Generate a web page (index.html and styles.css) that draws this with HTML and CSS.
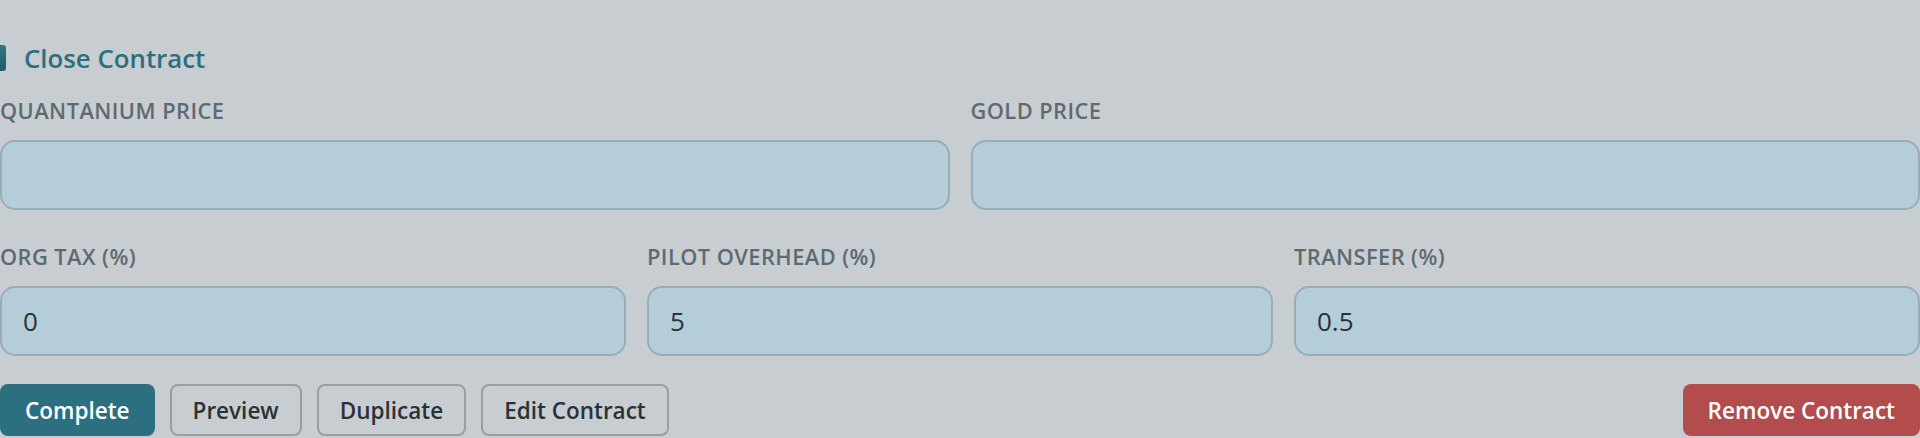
FILE: index.html
```html
<!DOCTYPE html>
<html lang="en">
  <head>
    <meta charset="UTF-8" />
    <meta name="viewport" content="width=device-width, initial-scale=1.0" />
    <title>Close Contract</title>

    <link rel="stylesheet" href="styles.css">
  </head>
  <body>
    <div class="contract">
      <h2 class="contract-title">Close Contract</h2>

      <div class="contract-row row-2">
        <label class="field">
          <span class="field-label">Quantanium Price</span>
          <input type="text" class="field-input" />
        </label>
        <label class="field">
          <span class="field-label">Gold Price</span>
          <input type="text" class="field-input" />
        </label>
      </div>

      <div class="contract-row row-3">
        <label class="field">
          <span class="field-label">Org Tax (%)</span>
          <input type="text" class="field-input" value="0" />
        </label>
        <label class="field">
          <span class="field-label">Pilot Overhead (%)</span>
          <input type="text" class="field-input" value="5" />
        </label>
        <label class="field">
          <span class="field-label">Transfer (%)</span>
          <input type="text" class="field-input" value="0.5" />
        </label>
      </div>

      <div class="contract-actions">
        <button class="btn btn-primary">Complete</button>
        <button class="btn btn-outline">Preview</button>
        <button class="btn btn-outline">Duplicate</button>
        <button class="btn btn-outline">Edit Contract</button>
        <button class="btn btn-danger">Remove Contract</button>
      </div>
    </div>
  </body>
</html>
```

FILE: styles.css
```css
:root {
  --bg-primary: #c8cdd1;
  --teal: #2c6f7e;
  --red: #b24c4d;
  --input-bg: #b4cdd8;
  --input-border: #97adb8;
  --label: #5e6a72;
  --text-dark: #2b3237;
  --btn-border: #979ea4;
  --white: #fff;
}

* {
  margin: 0;
  padding: 0;
  box-sizing: border-box;

  outline: none;
}

body {
  width: 100%;
  min-height: 100vh;

  font-family: "Open Sans", "Noto Sans", Arial, sans-serif;
  font-size: 16px;
  font-weight: 400;

  background: var(--bg-primary);
  color: var(--text-dark);
}

.contract {
  display: flex;
  flex-direction: column;

  padding-top: 42px;
}

.contract-title {
  position: relative;

  padding-left: 24px;
  margin-bottom: 25px;

  color: var(--teal);
  font-size: 25.8px;
  font-weight: 600;
  line-height: 32px;
}

.contract-title::before {
  position: absolute;
  left: 0;
  top: 3px;

  width: 6px;
  height: 26px;

  border-radius: 0 3px 3px 0;
  background: linear-gradient(180deg, #2f7787, #225d6b);

  content: '';
}

.contract-row {
  display: grid;
  gap: 21px;
}

.row-2 {
  grid-template-columns: repeat(2, 1fr);
  margin-bottom: 35px;
}

.row-3 {
  grid-template-columns: repeat(3, 1fr);
  margin-bottom: 28px;
}

.field {
  display: flex;
  flex-direction: column;
  gap: 17px;
}

.field-label {
  color: var(--label);
  font-size: 21.8px;
  font-weight: 600;
  line-height: 24px;
  letter-spacing: 0.45px;
  text-transform: uppercase;
}

.field-input {
  width: 100%;
  height: 70px;
  padding: 0 21px;

  border: 2px solid var(--input-border);
  border-radius: 15px;
  background: var(--input-bg);
  color: var(--text-dark);

  font-family: inherit;
  font-size: 26px;
}

.contract-actions {
  display: flex;
  align-items: center;
  gap: 15px;
}

.btn {
  height: 52px;
  padding: 0 23px;

  border: 2px solid transparent;
  border-radius: 8px;

  font-family: inherit;
  font-size: 22.5px;
  font-weight: 600;

  cursor: pointer;
}

.btn-primary {
  background: var(--teal);
  color: var(--white);
}

.btn-outline {
  padding: 0 21px;

  border-color: var(--btn-border);
  background: transparent;
  color: var(--text-dark);
}

.btn-danger {
  margin-left: auto;

  background: var(--red);
  color: var(--white);
}
```
